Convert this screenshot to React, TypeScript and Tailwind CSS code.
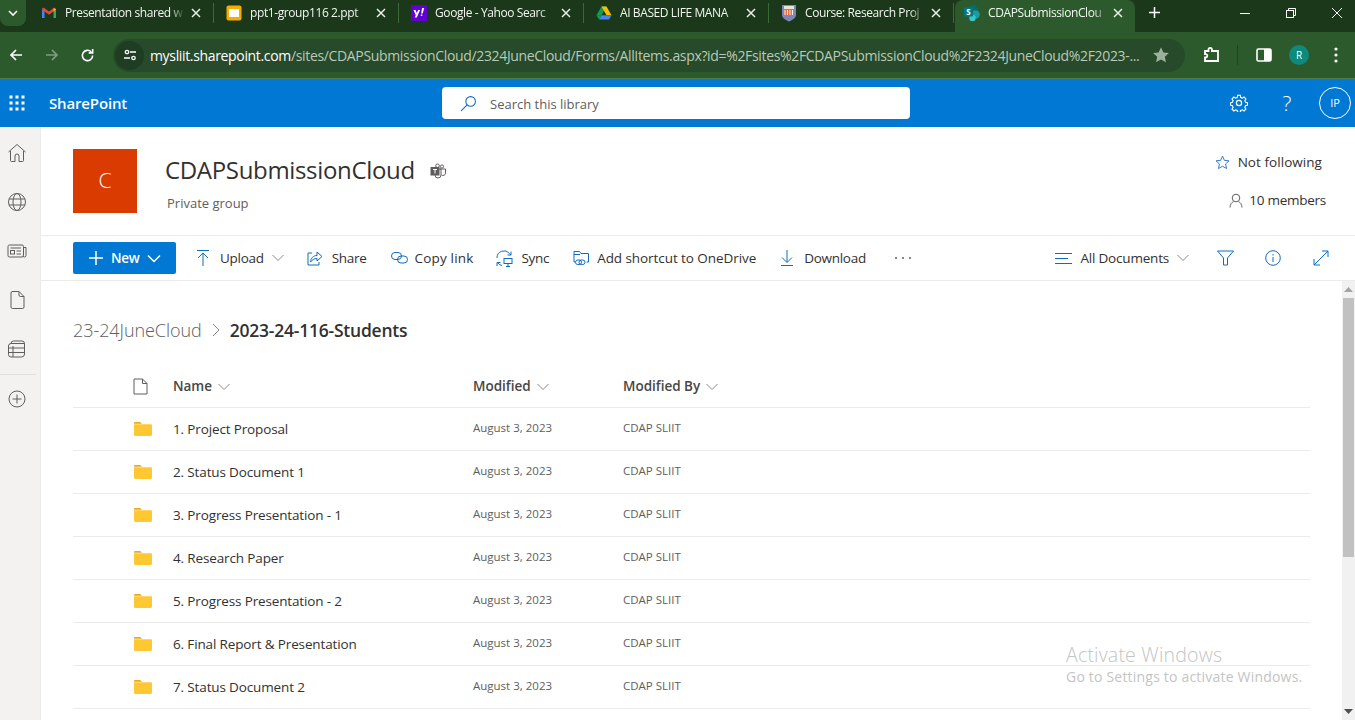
import React from "react";

const Icon = ({ size = 16, className = "", children, vb = 16 }: { size?: number; className?: string; children: React.ReactNode; vb?: number }) => (
  <svg width={size} height={size} viewBox={`0 0 ${vb} ${vb}`} fill="none" stroke="currentColor" strokeWidth={1} className={`shrink-0 ${className}`}>
    {children}
  </svg>
);

const Chevron = ({ className = "" }: { className?: string }) => (
  <svg width="12" height="8" viewBox="0 0 12 8" fill="none" stroke="currentColor" strokeWidth={1} className={`shrink-0 ${className}`}>
    <path d="M0.5 1 L6 6.5 L11.5 1" />
  </svg>
);

const Close = () => (
  <svg width="10" height="10" viewBox="0 0 10 10" stroke="#e8efe6" strokeWidth={1.5} className="shrink-0">
    <path d="M1 1 L9 9 M9 1 L1 9" />
  </svg>
);

const Gmail = () => (
  <svg width="16" height="16" viewBox="0 0 16 16" className="shrink-0">
    <path d="M1 13V4l2.5 1.5V13H1z" fill="#4285f4" />
    <path d="M15 13V4l-2.5 1.5V13H15z" fill="#34a853" />
    <path d="M1 4.5C1 3 2.6 2.4 3.6 3.2L8 6.6l4.4-3.4c1-.8 2.6-.2 2.6 1.3L12.500 6.500 8 9.800 3.500 6.500 1 4.500z" fill="#ea4335" />
    <path d="M12.500 3.100 15 4.500 12.500 6.500z" fill="#fbbc04" />
  </svg>
);
const Slides = () => (
  <svg width="16" height="16" viewBox="0 0 16 16" className="shrink-0">
    <rect x="0.500" y="0.500" width="15" height="15" rx="2" fill="#f9ab00" />
    <rect x="3" y="4" width="10" height="8" fill="#fff" />
  </svg>
);
const Yahoo = () => (
  <svg width="16" height="16" viewBox="0 0 16 16" className="shrink-0">
    <rect width="16" height="16" fill="#5f01d1" />
    <path d="M2.500 5h2l1.300 3 1.300-3h2l-3.300 7.500h-2l1-2.300L2.500 5z" fill="#fff" />
    <path d="M11 3h2.200l-1.500 5.500h-1.500L11 3z M9.800 9.500h1.500v1.500H9.800z" fill="#fff" />
  </svg>
);
const Drive = () => (
  <svg width="16" height="16" viewBox="0 0 16 16" className="shrink-0">
    <path d="M5.500 1.500h5l-5 8.700H0.500z" fill="#0f9d58" />
    <path d="M10.500 1.500 15.500 10.200h-5L5.500 1.500z" fill="#fbbc04" />
    <path d="M3 14.500l2.500-4.300h10l-2.500 4.300z" fill="#4285f4" />
    <path d="M0.500 10.200h5L3 14.500z" fill="#0f9d58" />
  </svg>
);
const Crest = () => (
  <svg width="16" height="18" viewBox="0 0 16 18" className="shrink-0">
    <path d="M1 1h14v10c0 3-3.500 5-7 6.500C4.500 16 1 14 1 11V1z" fill="#7c86b8" />
    <rect x="3" y="2" width="10" height="3" fill="#e9e4d8" />
    <rect x="3" y="6" width="10" height="5" fill="#e2724c" />
    <path d="M4 6v5M6.500 6v5M9 6v5M11.500 6v5" stroke="#f3ead8" strokeWidth="1" />
  </svg>
);
const SpLogo = () => (
  <svg width="18" height="18" viewBox="0 0 18 18" className="shrink-0">
    <circle cx="10" cy="6" r="5" fill="#036c70" />
    <circle cx="12.500" cy="10.500" r="4.300" fill="#1a9ba1" />
    <circle cx="9.500" cy="14" r="3.200" fill="#37c6d0" />
    <rect x="1" y="3.500" width="9" height="9" rx="1" fill="#03787c" />
    <text x="5.500" y="11" fontSize="8" fontWeight="700" fill="#fff" textAnchor="middle" fontFamily="Open Sans">S</text>
  </svg>
);

const tabs = [
  { icon: <Gmail />, label: "Presentation shared w" },
  { icon: <Slides />, label: "ppt1-group116 2.ppt" },
  { icon: <Yahoo />, label: "Google - Yahoo Searc" },
  { icon: <Drive />, label: "AI BASED LIFE MANA" },
  { icon: <Crest />, label: "Course: Research Proj" },
];

const TabBar = () => (
  <div className="h-8 bg-[#1b381b] flex items-stretch shrink-0 text-[#f1f5ef]">
    <div className="w-[30px] flex items-start">
      <div className="w-[26px] h-[26px] rounded-b-lg bg-[#2c5a2c] flex items-center justify-center">
        <svg width="10" height="7" viewBox="0 0 10 7" fill="none" stroke="#fff" strokeWidth="1.600"><path d="M1 1l4 4 4-4" /></svg>
      </div>
    </div>
    {tabs.map((t) => (
      <div key={t.label} className="w-[185px] pl-[11px] pb-[7px] flex items-center relative">
        <div className="w-4 flex justify-center">{t.icon}</div>
        <span className="ml-2 w-[125px] overflow-hidden whitespace-nowrap text-[12px] tracking-[-0.4px] [mask-image:linear-gradient(to_right,black_84%,transparent_96%)]">{t.label}</span>
        <span className="ml-[1px]"><Close /></span>
        <span className="ml-auto w-px h-5 bg-[#3a6a3a] mr-[1px]" />
      </div>
    ))}
    <div className="w-[180px] rounded-t-lg bg-[#2c5a2c] flex items-center pl-[8px] pb-[7px]">
      <SpLogo />
      <span className="ml-[7px] w-[125px] overflow-hidden whitespace-nowrap text-[12px] tracking-[-0.4px] [mask-image:linear-gradient(to_right,black_84%,transparent_96%)]">CDAPSubmissionClou</span>
      <span><Close /></span>
    </div>
    <div className="ml-[13px] flex items-center pb-[7px]">
      <svg width="13" height="13" viewBox="0 0 13 13" stroke="#fff" strokeWidth="1.500"><path d="M6.500 1v11M1 6.500h11" /></svg>
    </div>
    <div className="ml-auto flex items-center gap-[36px] pr-[13px] pb-[7px]">
      <svg width="10" height="10" viewBox="0 0 10 10" stroke="#fff" strokeWidth="1"><path d="M0 5.500h10" /></svg>
      <svg width="10" height="10" viewBox="0 0 10 10" fill="none" stroke="#fff" strokeWidth="1"><rect x="0.500" y="2.500" width="7" height="7" /><path d="M2.500 2.500v-2h7v7h-2" /></svg>
      <svg width="10" height="10" viewBox="0 0 10 10" stroke="#fff" strokeWidth="1"><path d="M0 0l10 10M10 0L0 10" /></svg>
    </div>
  </div>
);

const Toolbar = () => (
  <div className="h-[47px] bg-[#2c5a2c] border-b border-[#4c7a4c] flex items-center shrink-0 pl-[9px] pr-[13px] text-white">
    <svg width="14" height="14" viewBox="0 0 14 14" fill="none" stroke="#fff" strokeWidth="1.700"><path d="M13 7H2M7 2L2 7l5 5" /></svg>
    <svg width="14" height="14" viewBox="0 0 14 14" fill="none" stroke="#7f9d7f" strokeWidth="1.700" className="ml-[22px]"><path d="M1 7h11M7 2l5 5-5 5" /></svg>
    <svg width="15" height="15" viewBox="0 0 16 16" fill="none" stroke="#fff" strokeWidth="1.700" className="ml-[21px]"><path d="M13.500 8A5.500 5.500 0 1 1 12 4.200" /><path d="M13.500 1v4.200H9.300" /></svg>
    <div className="ml-[18px] w-[1072px] h-[33px] rounded-full bg-[#274a2b] flex items-center">
      <div className="w-[29px] h-[29px] ml-[2px] rounded-full bg-[#1f3d22] flex items-center justify-center">
        <svg width="14" height="12" viewBox="0 0 14 12" fill="none" stroke="#fff" strokeWidth="1.300"><circle cx="4" cy="3" r="1.700" /><path d="M7 3h6M1 9h6" /><circle cx="10.500" cy="9" r="1.700" /></svg>
      </div>
      <span className="ml-[6px] w-[990px] whitespace-nowrap overflow-hidden text-[14px] tracking-[-0.34px] text-[#b9c9b7]">
        <span className="text-white">mysliit.sharepoint.com</span>/sites/CDAPSubmissionCloud/2324JuneCloud/Forms/AllItems.aspx?id=%2Fsites%2FCDAPSubmissionCloud%2F2324JuneCloud%2F2023-...
      </span>
      <svg width="18" height="18" viewBox="0 0 24 24" fill="#9db09b" className="ml-[12px]"><path d="M12 1.500l3.200 7 7.300.8-5.400 5 1.500 7.400L12 18l-6.600 3.700 1.500-7.400-5.400-5 7.300-.8z" /></svg>
    </div>
    <svg width="18" height="18" viewBox="0 0 18 18" fill="none" stroke="#fff" strokeWidth="1.800" className="ml-[18px]"><path d="M2 5h3.500V3.500a1.700 1.700 0 0 1 3.400 0V5H15v10H2v-3.500h1a1.800 1.800 0 0 0 0-3.500H2z" /></svg>
    <div className="ml-[16px] w-px h-5 bg-[#1f4420]" />
    <svg width="16" height="16" viewBox="0 0 16 16" className="ml-[18px]"><rect x="1" y="2" width="14" height="12" rx="1.500" fill="none" stroke="#fff" strokeWidth="1.600" /><rect x="8" y="2" width="7" height="12" fill="#fff" /></svg>
    <div className="ml-[17px] w-5 h-5 rounded-full bg-[#0d8a7b] flex items-center justify-center text-[10px] text-white">R</div>
    <svg width="4" height="16" viewBox="0 0 4 16" fill="#fff" className="ml-[25px]"><circle cx="2" cy="2" r="1.600" /><circle cx="2" cy="8" r="1.600" /><circle cx="2" cy="14" r="1.600" /></svg>
  </div>
);

const SuiteBar = () => (
  <div className="h-12 bg-[#0078d4] flex items-center shrink-0 text-white">
    <div className="w-[34px] flex justify-center">
      <svg width="16" height="16" viewBox="0 0 16 16" fill="#fff">
        {[1, 7, 13].flatMap((y) => [1, 7, 13].map((x) => <rect key={`${x}-${y}`} x={x - 0.5} y={y - 0.5} width="3" height="3" />))}
      </svg>
    </div>
    <span className="ml-[15px] text-[15px] font-semibold tracking-[-0.15px] w-[393px]">SharePoint</span>
    <div className="w-[468px] h-8 rounded bg-white flex items-center pl-[18px]">
      <svg width="17" height="17" viewBox="0 0 16 16" fill="none" stroke="#0f6cbd" strokeWidth="1"><circle cx="10" cy="6" r="4.500" /><path d="M6.800 9.200 1 15" /></svg>
      <span className="ml-[13px] pt-[3px] text-[13px] text-[#605e5c]">Search this library</span>
    </div>
    <div className="ml-auto flex items-center pr-[4px]">
      <svg width="18" height="18" viewBox="0 0 18 18" fill="none" stroke="#fff" strokeWidth="1.200"><circle cx="9" cy="9" r="2.600" /><path d="M7.500 1h3l.4 2.200 1.700.7 1.900-1.200 2 2.100-1.200 1.800.7 1.700 2 .4v3l-2 .4-.7 1.700 1.200 1.900-2 2-1.900-1.200-1.700.7-.4 2h-3l-.4-2-1.700-.7-1.900 1.200-2-2 1.200-1.900-.7-1.700-2-.4v-3l2-.4.7-1.700-1.200-1.800 2-2.100 1.900 1.200 1.700-.7z" transform="translate(.6 .5) scale(.93)" /></svg>
      <span className="ml-[33px] text-[21px] font-light w-[12px] text-center leading-none">?</span>
      <div className="ml-[26px] w-8 h-8 rounded-full border border-white flex items-center justify-center text-[11px]">IP</div>
    </div>
  </div>
);

const railIcons = [
  <path key="h" d="M1.500 9 10 1.500 18.500 9M3.500 8v9.500a1 1 0 0 0 1 1H8V13a2 2 0 0 1 4 0v5.500h3.500a1 1 0 0 0 1-1V8" />,
  <g key="g"><circle cx="10" cy="10" r="8.500" /><ellipse cx="10" cy="10" rx="4" ry="8.500" /><path d="M2 7h16M2 13h16" /></g>,
  <g key="n"><rect x="1" y="4" width="15.500" height="12" rx="1.500" /><path d="M16.500 6.500H19v8a1.500 1.500 0 0 1-3 0M3.500 7h10.500M9.500 10H14M9.500 13H14" /><rect x="3.500" y="9.500" width="4" height="3.500" /></g>,
  <path key="f" d="M5 1.500h7L17 6.500V17a1.500 1.500 0 0 1-1.500 1.500h-10A1.500 1.500 0 0 1 4 17V3A1.500 1.500 0 0 1 5.500 1.500M12 1.500V5a1.500 1.500 0 0 0 1.500 1.500H17" />,
  <g key="l"><path d="M4 4.500A2.500 2.500 0 0 1 6.500 2H15a2.500 2.500 0 0 1 2.500 2.500V15a3 3 0 0 1-3 3H4a2.500 2.500 0 0 1-2.500-2.500V7A2.500 2.500 0 0 1 4 4.500h13.500M1.500 9h16M1.500 13.500h16M6 7v11" /></g>,
];

const Rail = () => (
  <div className="w-[41px] shrink-0 bg-[#f3f2f1] border-r border-[#edebe9] flex flex-col items-stretch pt-[16px] text-[#605e5c]">
    <div className="w-[34px] flex flex-col items-center gap-[29px]">
      {railIcons.map((g, i) => (
        <Icon key={i} size={20} vb={20}>{g}</Icon>
      ))}
    </div>
    <div className="w-[36px] h-px bg-[#e1dfdd] mt-[15px]" />
    <div className="w-[34px] flex justify-center mt-[14px]">
      <Icon size={20} vb={20}><circle cx="10" cy="10" r="8" /><path d="M10 5.500v9M5.500 10h9" /></Icon>
    </div>
  </div>
);

const SiteHeader = () => (
  <div className="h-[108px] flex items-start shrink-0 relative">
    <div className="ml-8 mt-[22px] w-16 h-16 bg-[#da3b01] text-white flex items-center justify-center text-[21px] font-light">C</div>
    <div className="ml-[28px] mt-[25px] flex flex-col">
      <div className="flex items-center">
        <span className="text-[24px] leading-[36px] font-medium tracking-[-0.33px] text-[#323130]">CDAPSubmissionCloud</span>
        <svg width="17" height="16" viewBox="0 0 17 16" fill="none" stroke="#605e5c" className="ml-[15px] mt-[1px]">
          <circle cx="12" cy="3.500" r="1.600" /><circle cx="7.500" cy="2.800" r="1.800" /><path d="M10 6h5.500v4a2.500 2.500 0 0 1-4 2" /><path d="M5 6h6v6a3 3 0 0 1-6 0z" />
          <rect x="1" y="4.500" width="8" height="7.500" fill="#605e5c" /><path d="M3 6.500h4M5 6.500v4" stroke="#fff" />
        </svg>
      </div>
      <span className="ml-[2px] mt-[6px] text-[13px] text-[#605e5c]">Private group</span>
    </div>
    <div className="ml-auto mr-[29px] mt-[24px] flex flex-col items-end text-[#323130] text-[13.500px] tracking-[-0.25px]">
      <div className="flex items-center mr-[4px] h-[22px] tracking-[0.05px]">
        <svg width="15" height="15" viewBox="0 0 16 16" fill="none" stroke="#2b70c9"><path d="M8 1.200l2 4.500 4.900.5-3.600 3.300 1 4.900L8 12l-4.300 2.400 1-4.900L1.100 6.200 6 5.700z" /></svg>
        <span className="ml-[8px]">Not following</span>
      </div>
      <div className="flex items-center mt-[16px] h-[22px]">
        <svg width="14" height="15" viewBox="0 0 14 15" fill="none" stroke="#605e5c"><circle cx="7" cy="5" r="3.800" /><path d="M1 14.500c0-3 2-5.500 3.500-5.800M13 14.500c0-3-2-5.500-3.500-5.800" /></svg>
        <span className="ml-[6px]">10 members</span>
      </div>
    </div>
  </div>
);

const Cmd = ({ icon, label, cls, gap, track = "" }: { icon: React.ReactNode; label: string; cls: string; gap: string; track?: string }) => (
  <div className={`flex items-center ${cls}`}>
    {icon}
    <span className={`${gap} ${track} whitespace-nowrap`}>{label}</span>
  </div>
);

const CommandBar = () => (
  <div className="h-[46px] border-y border-[#edebe9] flex items-center shrink-0 text-[13.500px] tracking-[-0.28px] text-[#323130]">
    <div className="ml-8 w-[103px] h-8 rounded-[2px] bg-[#0078d4] text-white font-semibold flex items-center pl-[15px]">
      <svg width="16" height="16" viewBox="0 0 16 16" stroke="#fff" strokeWidth="1.500"><path d="M8 1v14M1 8h14" /></svg>
      <span className="ml-[7px]">New</span>
      <svg width="14" height="9" viewBox="0 0 14 9" fill="none" stroke="#fff" strokeWidth="1.500" className="ml-[7px]"><path d="M1 1.500l6 6 6-6" /></svg>
    </div>
    <Cmd cls="ml-[21px]" gap="ml-[11px]" label="Upload" icon={<svg width="12" height="16" viewBox="0 0 12 16" fill="none" stroke="#0f6cbd"><path d="M0 .5h12M6 16V3M1 8l5-5 5 5" /></svg>} />
    <Chevron className="ml-[8px] text-[#8a8886]" />
    <Cmd cls="ml-[23px]" gap="ml-[9px]" label="Share" icon={<svg width="16" height="15" viewBox="0 0 16 15" fill="none" stroke="#0f6cbd"><path d="M5 2H1v12h11v-3" /><path d="M10 1l5 4.500L10 10V7.500C7 7.500 5 9 3.500 11c.3-4 3-6.500 6.500-6.500z" /></svg>} />
    <Cmd cls="ml-[24px]" gap="ml-[7px]" track="tracking-[0.16px]" label="Copy link" icon={<svg width="17" height="12" viewBox="0 0 17 12" fill="none" stroke="#0f6cbd"><rect x="0.500" y="0.500" width="10" height="7" rx="3.500" /><rect x="6.500" y="4" width="10" height="7" rx="3.500" /></svg>} />
    <Cmd cls="ml-[23px]" gap="ml-[8px]" label="Sync" icon={<svg width="17" height="17" viewBox="0 0 17 17" fill="none" stroke="#0f6cbd"><path d="M1 8a7 7 0 0 1 12.500-4.500L15 5M15 1.500V5h-3.500" /><path d="M1 16v-3.500h3.500M1.500 12.500A7 7 0 0 0 6 15.500" /><rect x="8" y="8.500" width="8" height="5" /><path d="M12 13.500v2.500M10 16.500h4" /></svg>} />
    <Cmd cls="ml-[24px]" gap="ml-[8px]" track="tracking-[-0.07px]" label="Add shortcut to OneDrive" icon={<svg width="16" height="16" viewBox="0 0 16 16" fill="none" stroke="#0f6cbd"><path d="M1 12V1.500h5.500L8 3.500h7.500V12h-2M1 4.500h6M1 12h1" /><rect x="2.500" y="10" width="6" height="4.500" rx="2.200" /><rect x="6" y="10" width="6" height="4.500" rx="2.200" /></svg>} />
    <Cmd cls="ml-[25px]" gap="ml-[11px]" label="Download" icon={<svg width="12" height="16" viewBox="0 0 12 16" fill="none" stroke="#0f6cbd"><path d="M0 15.500h12M6 0v12M1 7.500l5 5 5-5" /></svg>} />
    <svg width="18" height="4" viewBox="0 0 18 4" fill="#605e5c" className="ml-[28px]"><circle cx="2" cy="2" r="1" /><circle cx="9" cy="2" r="1" /><circle cx="16" cy="2" r="1" /></svg>
    <div className="ml-auto flex items-center pr-[26px]">
      <svg width="17" height="11" viewBox="0 0 17 11" stroke="#0f6cbd"><path d="M0 .5h17M0 5.500h13M0 10.500h17" /></svg>
      <span className="ml-[8px] tracking-[-0.2px]">All Documents</span>
      <Chevron className="ml-[8px] text-[#8a8886]" />
      <svg width="17" height="16" viewBox="0 0 17 16" fill="none" stroke="#0f6cbd" className="ml-[28px]"><path d="M.5 1h16l-6 7v7h-4V8z" /></svg>
      <svg width="16" height="16" viewBox="0 0 16 16" fill="none" stroke="#0f6cbd" className="ml-[31px]"><circle cx="8" cy="8" r="7.300" /><path d="M8 7v5M8 4v1.500" /></svg>
      <svg width="16" height="16" viewBox="0 0 16 16" fill="none" stroke="#0f6cbd" className="ml-[32px]"><path d="M1 15 15 1M9 1h6v6M1 9v6h6" /></svg>
    </div>
  </div>
);

const rows = [
  "1. Project Proposal",
  "2. Status Document 1",
  "3. Progress Presentation - 1",
  "4. Research Paper",
  "5. Progress Presentation - 2",
  "6. Final Report & Presentation",
  "7. Status Document 2",
];

const Folder = () => (
  <svg width="18" height="14" viewBox="0 0 18 14" className="shrink-0 ml-px">
    <path d="M0 1.200C0 .5.500 0 1.200 0h5L8 1.800h-8z" fill="#e8a91c" />
    <path d="M0 2.200h16.800c.7 0 1.200.5 1.200 1.200v9.400c0 .7-.5 1.200-1.200 1.200H1.200C.5 14 0 13.500 0 12.800z" fill="#ffc833" />
  </svg>
);

const cols = "grid grid-cols-[60px_40px_300px_150px_1fr] items-center";

const HeadCell = ({ label }: { label: string }) => (
  <div className="flex items-center text-[13.500px] font-semibold tracking-[-0.02px] text-[#484644]">
    {label}
    <Chevron className="ml-[6px] text-[#8a8886]" />
  </div>
);

const FileList = () => (
  <div className="flex-1 min-w-0 pl-8 pr-[32px] overflow-hidden">
    <div className="flex items-center h-[30px] mt-[34px]">
      <span className="text-[18px] text-[#605e5c] tracking-[-0.07px] font-light">23-24JuneCloud</span>
      <svg width="8" height="14" viewBox="0 0 8 14" fill="none" stroke="#8a8886" className="ml-[10px]"><path d="M1 1l6 6-6 6" /></svg>
      <span className="ml-[10px] text-[17.500px] font-semibold tracking-[-0.22px] text-[#323130]">2023-24-116-Students</span>
    </div>
    <div className={`${cols} h-[42px] mt-[21px] border-b border-[#edebe9]`}>
      <span />
      <svg width="15" height="17" viewBox="0 0 15 17" fill="none" stroke="#605e5c"><path d="M1 1h8.500L14 5.500V16H1zM9.500 1v4.500H14" /></svg>
      <HeadCell label="Name" />
      <HeadCell label="Modified" />
      <HeadCell label="Modified By" />
    </div>
    {rows.map((r) => (
      <div key={r} className={`${cols} h-[43px] border-b border-[#edebe9] text-[#605e5c]`}>
        <span />
        <Folder />
        <span className="text-[13.500px] tracking-[-0.14px] text-[#323130]">{r}</span>
        <span className="text-[11.500px] pb-[2px]">August 3, 2023</span>
        <span className="text-[11.500px] pb-[2px]">CDAP SLIIT</span>
      </div>
    ))}
  </div>
);

const Scrollbar = () => (
  <div className="w-[13px] shrink-0 bg-[#f1f1f1] flex flex-col items-center">
    <svg width="9" height="5" viewBox="0 0 9 5" fill="#a3a3a3" className="mt-[6px]"><path d="M4.500 0 9 5H0z" /></svg>
    <div className="w-[11px] h-[259px] mt-[6px] bg-[#c1c1c1]" />
    <svg width="9" height="5" viewBox="0 0 9 5" fill="#505050" className="mt-auto mb-[6px]"><path d="M4.500 5 9 0H0z" /></svg>
  </div>
);

export default function App() {
  return (
    <div className="w-[1355px] h-[720px] overflow-hidden flex flex-col relative bg-white font-['Open_Sans',sans-serif]">
      <TabBar />
      <Toolbar />
      <SuiteBar />
      <div className="flex flex-1 min-h-0">
        <Rail />
        <div className="flex-1 min-w-0 flex flex-col">
          <SiteHeader />
          <CommandBar />
          <div className="flex flex-1 min-h-0">
            <FileList />
            <Scrollbar />
          </div>
        </div>
      </div>
      <div className="absolute left-[1066px] top-[642px] text-[#c4c4c4] pointer-events-none">
        <div className="text-[19.500px] leading-[26px] tracking-[0.2px] font-light">Activate Windows</div>
        <div className="text-[14px] leading-[18px] tracking-[0.2px]">Go to Settings to activate Windows.</div>
      </div>
    </div>
  );
}
